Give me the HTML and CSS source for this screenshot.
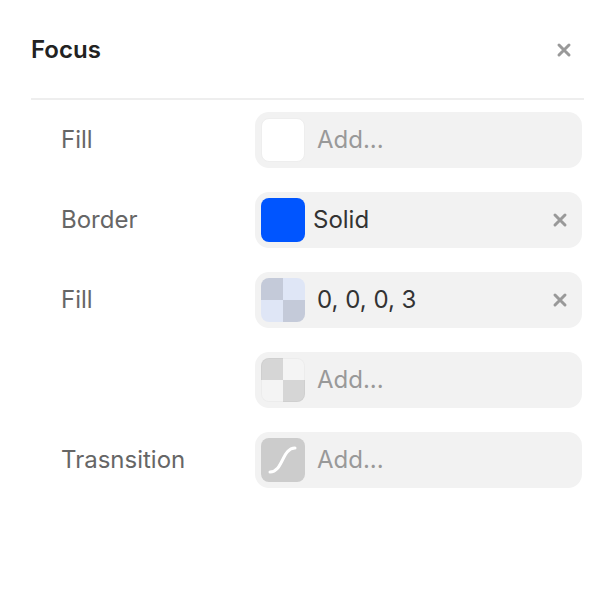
FILE: index.html
```html
<!DOCTYPE html>
<html lang="en">
<head>
  <meta charset="UTF-8">
  <meta name="viewport" content="width=device-width, initial-scale=1.0">
  <title>Focus</title>
  <link rel="stylesheet" href="styles.css">
</head>
<body>
  <main class="panel">
    <header class="panel-header">
      <h1>Focus</h1>
      <button type="button" class="close" aria-label="Close">
        <svg viewBox="0 0 16 16" width="16" height="16"><path d="M3 3l10 10M13 3L3 13"/></svg>
      </button>
    </header>

    <form class="rows">
      <div class="row">
        <label for="fill">Fill</label>
        <div class="field">
          <button type="button" class="swatch white" aria-label="Fill color"></button>
          <input type="text" id="fill" placeholder="Add...">
        </div>
      </div>

      <div class="row">
        <label for="border">Border</label>
        <div class="field field-solid">
          <button type="button" class="swatch blue" aria-label="Border color"></button>
          <input type="text" id="border" value="Solid">
          <button type="button" class="close" aria-label="Remove border">
            <svg viewBox="0 0 16 16" width="16" height="16"><path d="M3 3l10 10M13 3L3 13"/></svg>
          </button>
        </div>
      </div>

      <div class="row">
        <label for="shadow">Fill</label>
        <div class="field">
          <button type="button" class="swatch checker-blue" aria-label="Shadow color"></button>
          <input type="text" id="shadow" value="0, 0, 0, 3">
          <button type="button" class="close" aria-label="Remove shadow">
            <svg viewBox="0 0 16 16" width="16" height="16"><path d="M3 3l10 10M13 3L3 13"/></svg>
          </button>
        </div>
      </div>

      <div class="row">
        <div class="field">
          <button type="button" class="swatch checker" aria-label="New shadow color"></button>
          <input type="text" placeholder="Add..." aria-label="Add shadow">
        </div>
      </div>

      <div class="row">
        <label for="transition">Trasnsition</label>
        <div class="field">
          <button type="button" class="swatch curve" aria-label="Transition curve">
            <svg viewBox="0 0 44 44" width="44" height="44"><path d="M9 34C22 34 21 10 34 10"/></svg>
          </button>
          <input type="text" id="transition" placeholder="Add...">
        </div>
      </div>
    </form>
  </main>
</body>
</html>
```

FILE: styles.css
```css
* {
  box-sizing: border-box;
}

body {
  margin: 0;
  background-color: #fff;
  color: #666;
  font-family: Inter, sans-serif;
  font-size: 24px;
  line-height: 32px;
}

.panel {
  padding: 0 30px 0 31px;
}

.panel-header {
  display: flex;
  justify-content: space-between;
  align-items: center;
  height: 100px;
  padding: 2px 12px 0 0;
  border-bottom: 2px solid #eee;
}

h1 {
  margin: 0;
  color: #222;
  font-size: 24px;
  font-weight: 600;
}

button {
  padding: 0;
  border: none;
  background: none;
  cursor: pointer;
}

svg {
  display: block;
  fill: none;
  stroke-linecap: round;
}

.close {
  flex: none;
  stroke: #999;
  stroke-width: 3px;
}

.rows {
  display: grid;
  gap: 24px;
  padding: 12px 2px 0 30px;
}

.row {
  display: grid;
  grid-template-columns: 194px 1fr;
  align-items: center;
}

.field {
  grid-column: 2;
  display: flex;
  align-items: center;
  gap: 12px;
  min-width: 0;
  padding: 6px 14px 6px 6px;
  border-radius: 14px;
  background-color: #f2f2f2;
}

.field-solid {
  gap: 8px;
}

.field input {
  flex: 1;
  min-width: 0;
  padding: 0;
  border: none;
  outline: none;
  background: none;
  color: #333;
  font: inherit;
}

.field input::placeholder {
  color: #999;
  opacity: 1;
}

.swatch {
  flex: none;
  width: 44px;
  height: 44px;
  border-radius: 8px;
}

.white {
  border: 1px solid #eee;
  background-color: #fff;
}

.blue {
  background-color: #05f;
}

.checker {
  background: conic-gradient(#f4f4f4 25%, #d6d6d6 0 50%, #f4f4f4 0 75%, #d6d6d6 0);
  box-shadow: inset 0 0 0 1px rgba(0, 0, 0, 0.03);
}

.checker-blue {
  background: conic-gradient(#dfe6f6 25%, #c4cad9 0 50%, #dfe6f6 0 75%, #c4cad9 0);
}

.curve {
  background-color: #ccc;
  stroke: #fff;
  stroke-width: 3px;
}
```
